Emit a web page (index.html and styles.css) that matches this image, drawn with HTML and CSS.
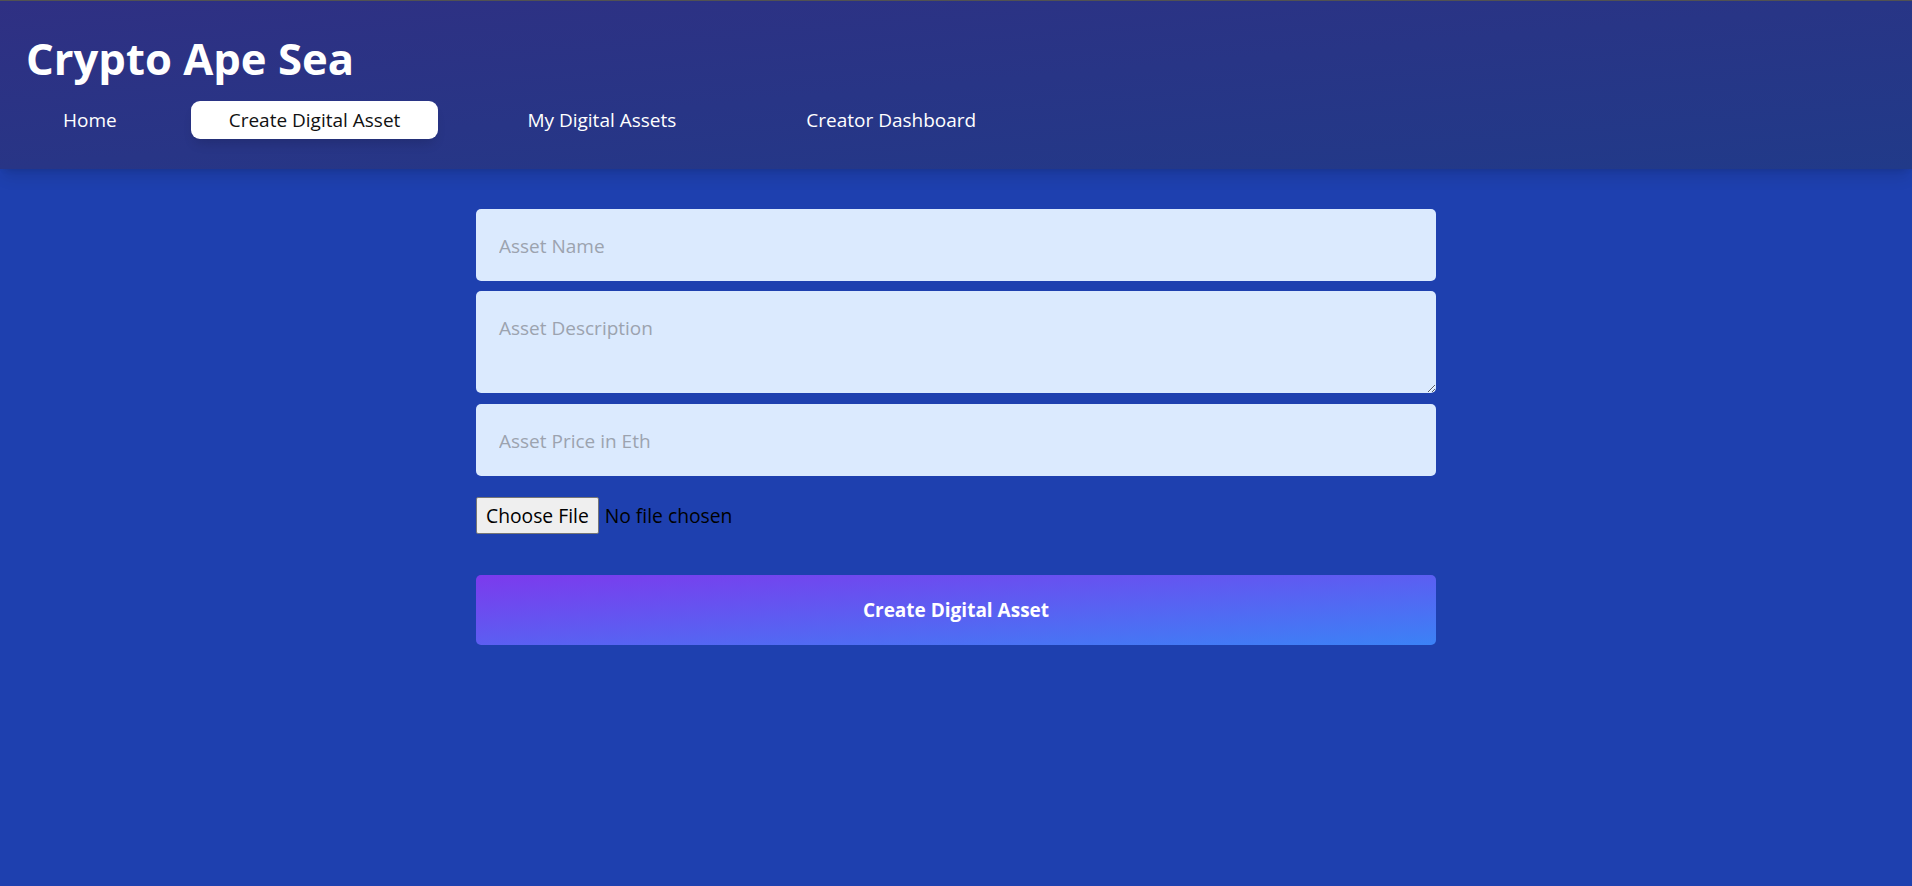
FILE: index.html
```html
<!DOCTYPE html>
<html lang="en">
<head>
<meta charset="utf-8">
<title>Crypto Ape Sea</title>
<link rel="stylesheet" href="styles.css">
</head>
<body>
<header class="topbar">
  <h1 class="brand">Crypto Ape Sea</h1>
  <nav class="nav">
    <a class="nav-link nav-link--home" href="#">Home</a>
    <a class="nav-link nav-link--create is-active" href="#">Create Digital Asset</a>
    <a class="nav-link nav-link--mine" href="#">My Digital Assets</a>
    <a class="nav-link" href="#">Creator Dashboard</a>
  </nav>
</header>
<main class="main">
  <form class="form">
    <input class="field" type="text" placeholder="Asset Name">
    <textarea class="field field--area" placeholder="Asset Description"></textarea>
    <input class="field field--price" type="text" placeholder="Asset Price in Eth">
    <input class="file" type="file">
    <button class="submit" type="button">Create Digital Asset</button>
  </form>
</main>
</body>
</html>
```
FILE: styles.css
```css
* { box-sizing: border-box; }

html, body {
  margin: 0;
  padding: 0;
}

body {
  min-height: 886px;
  background: #1e40af;
  font-family: "Open Sans", "Noto Sans", sans-serif;
}

.topbar {
  position: relative;
  z-index: 1;
  height: 169px;
  border-top: 1px solid #525252;
  padding: 29px 0 0 26px;
  background: linear-gradient(to bottom right, #2f3083, #213a89);
  box-shadow: 0 10px 15px -3px rgba(0, 0, 0, 0.12), 0 4px 6px -4px rgba(0, 0, 0, 0.12);
}

.brand {
  margin: 0;
  color: #fff;
  font-size: 43.6px;
  line-height: 56px;
  font-weight: 700;
}

.nav {
  display: flex;
  align-items: center;
  margin-top: 15px;
  margin-left: -1px;
}

.nav-link {
  display: inline-block;
  padding: 5px 38px;
  font-size: 19px;
  line-height: 28px;
  color: #fff;
  text-decoration: none;
  border-radius: 9px;
}

.nav-link--home { margin-right: 36px; }
.nav-link--create { margin-right: 51px; }
.nav-link--mine { margin-right: 54px; }

.nav-link.is-active {
  background: #fff;
  color: #111;
  box-shadow: 0 8px 12px -4px rgba(0, 0, 0, 0.15);
}

.main {
  padding-top: 40px;
}

.form {
  width: 960px;
  margin: 0 auto;
  display: flex;
  flex-direction: column;
}

.field {
  display: block;
  width: 100%;
  height: 72px;
  padding: 23px 21px 21px 23px;
  border: none;
  border-radius: 5px;
  background: #dbeafe;
  font-family: inherit;
  font-size: 19px;
  line-height: 28px;
  color: #111;
  outline: none;
}

.field + .field { margin-top: 10px; }
.field--price { margin-top: 11px !important; }

.field--area {
  height: 102px;
  resize: both;
}

.field::placeholder {
  color: #9ca3af;
}

.file {
  margin-top: 21px;
  font-family: inherit;
  font-size: 19.3px;
  color: #000;
  height: 37px;
}

.file::file-selector-button {
  font-family: inherit;
  font-size: 19.3px;
  height: 37px;
  padding: 0 9px;
  margin-right: 6px;
  border: 1px solid #767676;
  border-radius: 2px;
  background: #efefef;
  color: #000;
}

.submit {
  margin-top: 41px;
  height: 70px;
  border: none;
  border-radius: 5px;
  background: linear-gradient(to bottom right, #7c3aed, #3b82f6);
  color: #fff;
  font-family: inherit;
  font-size: 19px;
  font-weight: 700;
}
```
